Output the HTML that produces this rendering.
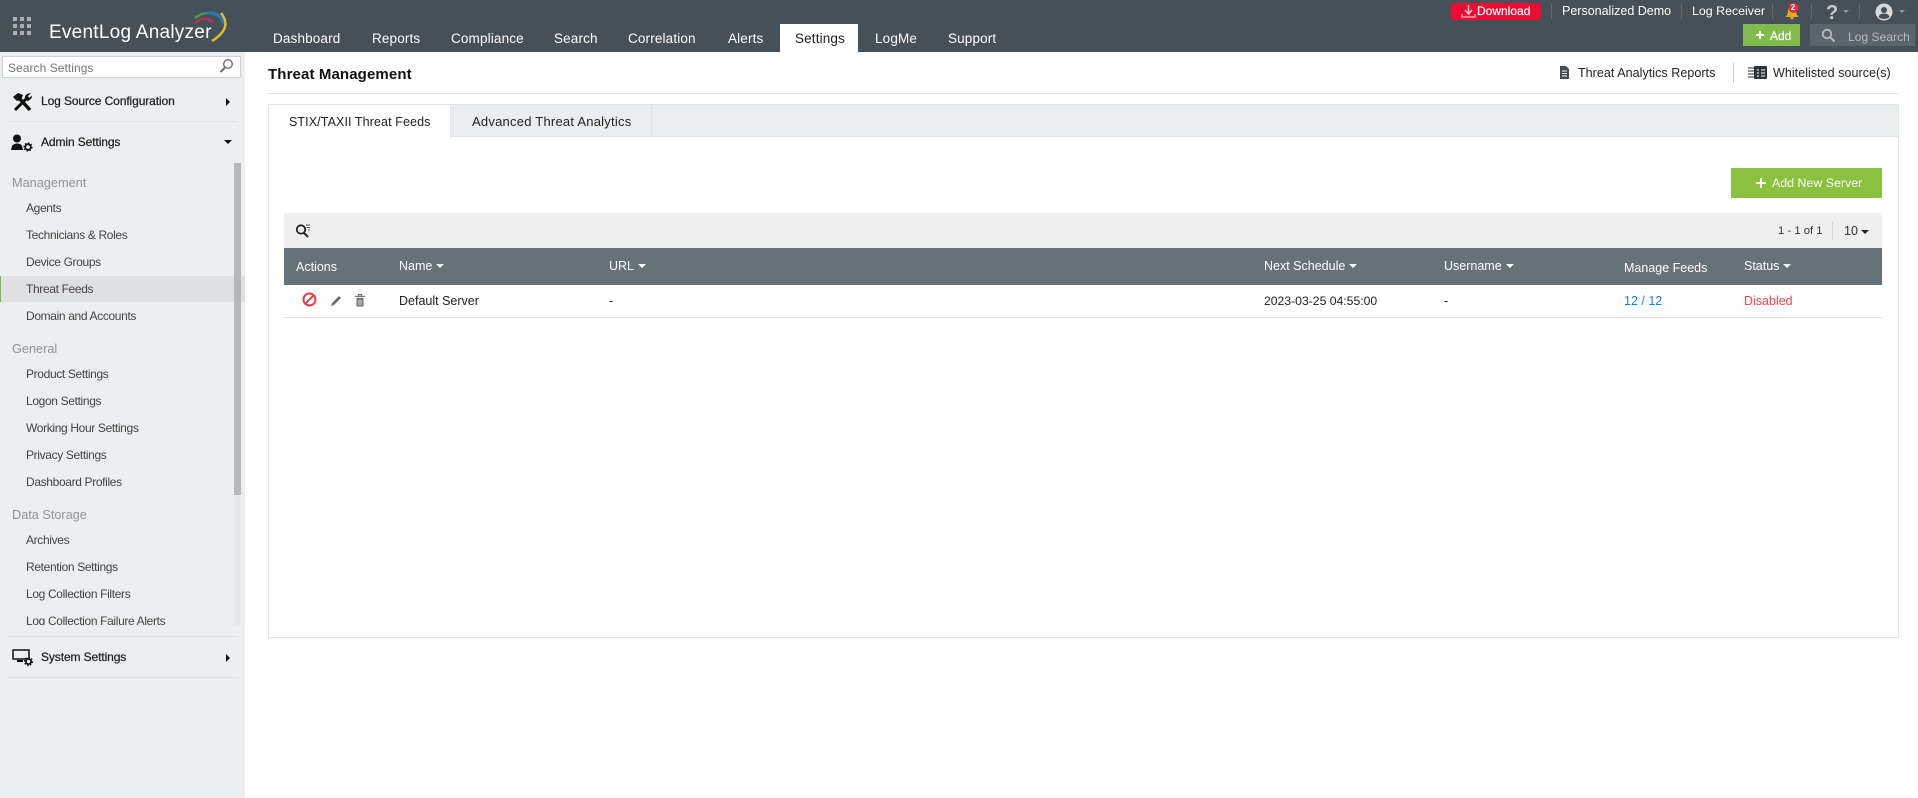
<!DOCTYPE html>
<html><head><meta charset="utf-8"><title>Threat Management</title>
<style>
html,body{margin:0;padding:0;width:1918px;height:798px;overflow:hidden;background:#fff;font-family:"Liberation Sans",sans-serif;font-size:12.5px;color:#222}
.a{position:absolute}
.t{position:absolute;white-space:nowrap;height:20px;line-height:20px}
.nav{color:#fff;font-size:13.5px;letter-spacing:.15px}
.it{left:26px;color:#444;font-size:12px;letter-spacing:-.35px}
.sec{left:12px;color:#8f9496;font-size:12.8px;letter-spacing:-.05px}
.hd{left:41px;color:#222;font-size:12px;letter-spacing:-.1px;-webkit-text-stroke:.25px #222}
.th{color:#fff;font-size:12.5px}
.c{display:inline-block;border-left:4.5px solid transparent;border-right:4.5px solid transparent;border-top:4.5px solid #fff;margin-left:4px;vertical-align:2px}
.g{background:#e2e2e2}
.sp{background:#5d6870;width:1px;height:16px;top:3px}
</style></head><body>
<div class="a" style="left:0;top:0;width:1918px;height:52px;background:#455059"></div>
<svg class="a" style="left:0;top:0" width="240" height="52">
<g fill="#a9afb3"><rect x="13" y="17" width="4" height="4"/><rect x="20" y="17" width="4" height="4"/><rect x="27" y="17" width="4" height="4"/><rect x="13" y="24" width="4" height="4"/><rect x="20" y="24" width="4" height="4"/><rect x="27" y="24" width="4" height="4"/><rect x="13" y="31" width="4" height="4"/><rect x="20" y="31" width="4" height="4"/><rect x="27" y="31" width="4" height="4"/></g>
<g fill="none"><path d="M195 18Q205 10 217 15" stroke="#3b9a5c" stroke-width="2.5"/><path d="M207 13Q219 11 224 24" stroke="#2a78b8" stroke-width="3"/><path d="M195 23Q204 15 213 22" stroke="#b8324a" stroke-width="2.5"/><path d="M221 13Q233 28 212 41" stroke="#e5b82a" stroke-width="2.5"/></g>
</svg>
<div class="t" style="left:49px;top:23px;color:#fff;font-size:19px;letter-spacing:.25px">EventLog Analyzer</div>
<div class="t nav" style="left:273px;top:29px">Dashboard</div>
<div class="t nav" style="left:372px;top:29px">Reports</div>
<div class="t nav" style="left:451px;top:29px">Compliance</div>
<div class="t nav" style="left:554px;top:29px">Search</div>
<div class="t nav" style="left:628px;top:29px">Correlation</div>
<div class="t nav" style="left:728px;top:29px">Alerts</div>
<div class="a" style="left:780px;top:24px;width:78px;height:28px;background:#fff"></div>
<div class="t nav" style="left:795px;top:29px;color:#222">Settings</div>
<div class="t nav" style="left:875px;top:29px">LogMe</div>
<div class="t nav" style="left:948px;top:29px">Support</div>

<div class="a" style="left:1451px;top:3px;width:90px;height:17px;background:#ee0a32;border-radius:3px"></div>
<svg class="a" style="left:1461px;top:4px" width="15" height="15"><path d="M7.500 1V9M4 6L7.500 10L11 6" fill="none" stroke="#f7c0c8" stroke-width="1.600"/><path d="M1 10V13H14V10" fill="none" stroke="#f7c0c8" stroke-width="1.300"/></svg>
<div class="t" style="left:1477px;top:1px;color:#fff;font-size:12px;-webkit-text-stroke:.2px #fff">Download</div>
<div class="a sp" style="left:1551px"></div>
<div class="t" style="left:1562px;top:1px;color:#fff;font-size:12.500px">Personalized Demo</div>
<div class="a sp" style="left:1681px"></div>
<div class="t" style="left:1692px;top:1px;color:#fff;font-size:12.400px">Log Receiver</div>
<div class="a sp" style="left:1772px"></div>
<svg class="a" style="left:1784px;top:2px" width="17" height="18"><path d="M1 15Q4 13 4 9Q4 5 8 5Q12 5 12 9Q12 13 15 15Z" fill="#e8a91f"/><circle cx="8" cy="16" r="1.500" fill="#e8a91f"/><circle cx="9.500" cy="6" r="5" fill="#ee2a3a"/></svg>
<div class="t" style="left:1788px;top:-2px;width:10px;text-align:center;color:#fff;font-size:8px;font-weight:bold">2</div>
<div class="a sp" style="left:1811px"></div>
<div class="t" style="left:1826px;top:3px;color:#c8cccf;font-size:20px;font-weight:bold">?</div>
<div class="a" style="left:1843px;top:10px;border-left:3px solid transparent;border-right:3px solid transparent;border-top:3px solid #8a9298"></div>
<div class="a sp" style="left:1859px"></div>
<svg class="a" style="left:1875px;top:3px" width="18" height="18"><circle cx="9" cy="9" r="8.500" fill="#d5d8da"/><circle cx="9" cy="7" r="3" fill="#455059"/><path d="M3.500 14Q4.500 10.500 9 10.500Q13.500 10.500 14.500 14Q9 18 3.500 14Z" fill="#455059"/></svg>
<div class="a" style="left:1899px;top:10px;border-left:3px solid transparent;border-right:3px solid transparent;border-top:3px solid #8a9298"></div>
<div class="a" style="left:1743px;top:24px;width:57px;height:22px;background:#82bb4d"></div>
<svg class="a" style="left:1755px;top:30px" width="10" height="10"><path d="M5 1V9M1 5H9" stroke="#fff" stroke-width="2"/></svg>
<div class="t" style="left:1770px;top:26px;color:#fff;font-size:12px;-webkit-text-stroke:.2px #fff">Add</div>
<div class="a" style="left:1810px;top:24px;width:105px;height:22px;background:#59646c"></div>
<svg class="a" style="left:1821px;top:28px" width="15" height="15"><circle cx="6" cy="6" r="4.300" fill="none" stroke="#b5bcc0" stroke-width="1.800"/><path d="M9.300 9.300L13.500 13.500" stroke="#b5bcc0" stroke-width="2"/></svg>
<div class="t" style="left:1848px;top:27px;color:#b5bcc0;font-size:12px;letter-spacing:.05px">Log Search</div>

<div class="a" style="left:0;top:52px;width:245px;height:746px;background:#ebeff0"></div>
<div class="a" style="left:2px;top:56px;width:237px;height:20px;background:#fff;border:1px solid #ced2d3"></div>
<div class="t" style="left:8px;top:58px;color:#777;font-size:12px;letter-spacing:.05px">Search Settings</div>
<svg class="a" style="left:219px;top:58px" width="15" height="16"><circle cx="9" cy="6" r="4.300" fill="none" stroke="#6b6f72" stroke-width="1.400"/><path d="M6 9.500L1.500 14" stroke="#6b6f72" stroke-width="2"/></svg>

<svg class="a" style="left:12px;top:92px" width="21" height="21"><path d="M18 18L7 6" stroke="#111" stroke-width="3.500" fill="none"/><path d="M1 5L6 1L11 3L9 8L5 9Z" fill="#111"/><path d="M3 18L14 7" stroke="#111" stroke-width="3" fill="none"/><path d="M13 8Q12 3 16 1.500L19 1L16 4L17 6L20 3.500Q20 8 15 9Z" fill="#111"/></svg>
<div class="t hd" style="top:91px">Log Source Configuration</div>
<div class="a" style="left:226px;top:98px;border-top:4px solid transparent;border-bottom:4px solid transparent;border-left:4px solid #111"></div>
<div class="a g" style="left:8px;top:121px;width:230px;height:1px"></div>
<svg class="a" style="left:11px;top:134px" width="22" height="19"><circle cx="6" cy="4.500" r="4" fill="#111"/><path d="M0 16L1 12Q3 9.500 6 9.500Q10 9.500 11 12L12 16Z" fill="#111"/><circle cx="17" cy="13" r="2.800" fill="none" stroke="#111" stroke-width="1.800"/><circle cx="17" cy="13" r="4" fill="none" stroke="#111" stroke-width="1.200" stroke-dasharray="1.500 1.600"/></svg>
<div class="t hd" style="top:132px">Admin Settings</div>
<div class="a" style="left:224px;top:140px;border-left:4px solid transparent;border-right:4px solid transparent;border-top:4px solid #111"></div>

<div class="a" style="left:234px;top:163px;width:7px;height:462px;background:#e6e8e9"></div>
<div class="a" style="left:234px;top:163px;width:7px;height:332px;background:#b3b8ba"></div>
<div class="a" style="left:0;top:276px;width:234px;height:26px;background:#dfe0e2"></div>
<div class="a" style="left:241px;top:276px;width:4px;height:26px;background:#dfe0e2"></div>
<div class="a" style="left:0;top:276px;width:1px;height:26px;background:#7cb850"></div>

<div class="a" style="left:0;top:163px;width:234px;height:462px;overflow:hidden">
<div class="t sec" style="top:10px">Management</div>
<div class="t it" style="top:35px">Agents</div>
<div class="t it" style="top:62px">Technicians &amp; Roles</div>
<div class="t it" style="top:89px">Device Groups</div>
<div class="t it" style="top:116px">Threat Feeds</div>
<div class="t it" style="top:143px">Domain and Accounts</div>
<div class="t sec" style="top:176px">General</div>
<div class="t it" style="top:201px">Product Settings</div>
<div class="t it" style="top:228px">Logon Settings</div>
<div class="t it" style="top:255px">Working Hour Settings</div>
<div class="t it" style="top:282px">Privacy Settings</div>
<div class="t it" style="top:309px">Dashboard Profiles</div>
<div class="t sec" style="top:342px">Data Storage</div>
<div class="t it" style="top:367px">Archives</div>
<div class="t it" style="top:394px">Retention Settings</div>
<div class="t it" style="top:421px">Log Collection Filters</div>
<div class="t it" style="top:448px">Log Collection Failure Alerts</div>
</div>

<div class="a g" style="left:8px;top:636px;width:230px;height:1px"></div>
<svg class="a" style="left:12px;top:648px" width="22" height="19"><path d="M1 2H17V11H1Z" fill="none" stroke="#111" stroke-width="1.500"/><path d="M5 13H11" stroke="#111" stroke-width="2"/><circle cx="16.500" cy="13.500" r="2.600" fill="#ebeff0" stroke="#111" stroke-width="1.800"/><circle cx="16.500" cy="13.500" r="4" fill="none" stroke="#111" stroke-width="1.200" stroke-dasharray="1.500 1.600"/></svg>
<div class="t hd" style="top:647px">System Settings</div>
<div class="a" style="left:226px;top:654px;border-top:4px solid transparent;border-bottom:4px solid transparent;border-left:4px solid #111"></div>
<div class="a g" style="left:8px;top:677px;width:230px;height:1px"></div>

<div class="t" style="left:268px;top:65px;color:#111;font-size:15px;font-weight:bold;letter-spacing:.12px">Threat Management</div>
<svg class="a" style="left:1559px;top:66px" width="11" height="13"><path d="M1 0H7L10 3V13H1Z" fill="#444d54"/><path d="M3 5H8M3 7.500H8M3 10H8" stroke="#fff" stroke-width="1"/></svg>
<div class="t" style="left:1578px;top:63px;color:#222;font-size:12.500px;letter-spacing:.05px">Threat Analytics Reports</div>
<div class="a" style="left:1733px;top:63px;width:1px;height:20px;background:#ccc"></div>
<svg class="a" style="left:1748px;top:65px" width="20" height="15"><path d="M0 3H6M0 6H6M0 9H6M0 12H6" stroke="#555" stroke-width="1.300"/><rect x="6" y="1" width="13" height="13" rx="1" fill="#2e3438"/><path d="M9 5H11M13 5H17M9 8H11M13 8H17M9 11H11M13 11H17" stroke="#fff" stroke-width="1"/></svg>
<div class="t" style="left:1773px;top:63px;color:#222;font-size:12.500px;letter-spacing:.05px">Whitelisted source(s)</div>
<div class="a g" style="left:268px;top:93px;width:1630px;height:1px"></div>

<div class="a" style="left:268px;top:104px;width:1629px;height:532px;border:1px solid #e2e5e5"></div>
<div class="a" style="left:268px;top:104px;width:1630px;height:33px;background:#ebeeee;border-top:1px solid #e2e5e5;border-bottom:1px solid #e2e5e5;box-sizing:border-box"></div>
<div class="a" style="left:268px;top:104px;width:183px;height:34px;background:#fff;border:1px solid #e2e5e5;border-bottom:0;box-sizing:border-box"></div>
<div class="a" style="left:651px;top:105px;width:1px;height:31px;background:#e0e3e3"></div>
<div class="t" style="left:289px;top:112px;color:#222;font-size:12.500px;letter-spacing:.1px">STIX/TAXII Threat Feeds</div>
<div class="t" style="left:472px;top:112px;color:#222;font-size:13px;letter-spacing:.23px">Advanced Threat Analytics</div>

<div class="a" style="left:1731px;top:168px;width:151px;height:30px;background:#8cc13f"></div>
<svg class="a" style="left:1755px;top:177px" width="12" height="12"><path d="M6 1V11M1 6H11" stroke="#fff" stroke-width="1.800"/></svg>
<div class="t" style="left:1772px;top:173px;color:#fff;font-size:12.400px">Add New Server</div>

<div class="a" style="left:284px;top:213px;width:1598px;height:35px;background:#efefef"></div>
<svg class="a" style="left:295px;top:223px" width="16" height="16"><circle cx="6" cy="6.500" r="4.200" fill="none" stroke="#222" stroke-width="1.800"/><path d="M9 10L13 14" stroke="#222" stroke-width="2"/><path d="M11 2H15M12 4.500H15M13 7H15" stroke="#555" stroke-width="1"/></svg>
<div class="t" style="left:1778px;top:221px;color:#333;font-size:11.300px">1 - 1 of 1</div>
<div class="a" style="left:1832px;top:222px;width:1px;height:18px;background:#d4d4d4"></div>
<div class="t" style="left:1844px;top:221px;color:#333;font-size:12.500px">10<span class="c" style="border-top-color:#222;margin-left:3px;vertical-align:1px"></span></div>

<div class="a" style="left:284px;top:248px;width:1598px;height:37px;background:#65727a"></div>
<div class="t th" style="left:296px;top:257px">Actions</div>
<div class="t th" style="left:399px;top:256px">Name<span class="c"></span></div>
<div class="t th" style="left:609px;top:256px">URL<span class="c"></span></div>
<div class="t th" style="left:1264px;top:256px">Next Schedule<span class="c"></span></div>
<div class="t th" style="left:1444px;top:256px">Username<span class="c"></span></div>
<div class="t th" style="left:1624px;top:258px">Manage Feeds</div>
<div class="t th" style="left:1744px;top:256px">Status<span class="c"></span></div>

<svg class="a" style="left:302px;top:292px" width="15" height="15"><circle cx="7.500" cy="7.500" r="6" fill="none" stroke="#e8404a" stroke-width="2"/><path d="M3.300 11.700L11.700 3.300" stroke="#e8404a" stroke-width="2"/></svg>
<svg class="a" style="left:330px;top:294px" width="13" height="13"><path d="M1 12L2 9L9 2L11 4L4 11Z" fill="#6a6f73"/></svg>
<svg class="a" style="left:355px;top:294px" width="11" height="13"><path d="M0 2.500H10M3.500 2V0.700H6.500V2" fill="none" stroke="#777" stroke-width="1.300"/><path d="M1.500 4H8.500V12.500H1.500Z" fill="#777"/><path d="M4 6V11M6 6V11" stroke="#fff" stroke-width=".8"/></svg>
<div class="t" style="left:399px;top:291px;color:#222;font-size:12.500px">Default Server</div>
<div class="t" style="left:609px;top:291px;color:#222;font-size:12.500px">-</div>
<div class="t" style="left:1264px;top:291px;color:#222;font-size:12.200px">2023-03-25 04:55:00</div>
<div class="t" style="left:1444px;top:291px;color:#222;font-size:12.500px">-</div>
<div class="t" style="left:1624px;top:291px;color:#1a86c8;font-size:12.500px">12 / 12</div>
<div class="t" style="left:1744px;top:291px;color:#f0484c;font-size:12.500px">Disabled</div>
<div class="a g" style="left:284px;top:317px;width:1598px;height:1px"></div>
</body></html>
